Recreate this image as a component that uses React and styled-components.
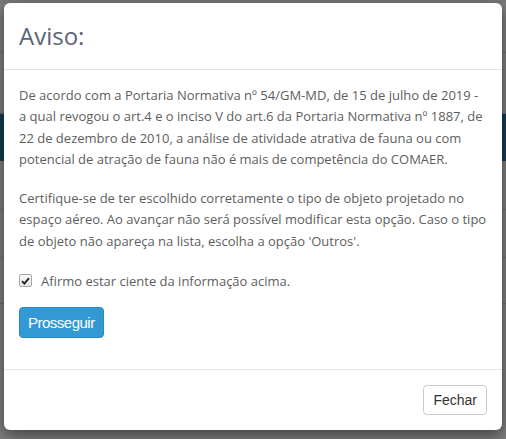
import React from 'react';
import styled, { createGlobalStyle } from 'styled-components';

const GlobalStyle = createGlobalStyle`
  html, body {
    margin: 0;
    padding: 0;
    width: 506px;
    height: 439px;
    overflow: hidden;
    background: #fff;
  }
`

function App() {
  return (
    <Page>
      <GlobalStyle />

      <Behind>
        <NavStrip />
        <Row h={60} />
        <BlueBand />
        <Row h={48} />
        <Row h={47} />
        <Row h={45} />
      </Behind>

      <Backdrop>
        <Dialog>
          <Header>
            <Title>Aviso:</Title>
          </Header>

          <Body>
            <Text>
              De acordo com a Portaria Normativa nº 54/GM-MD, de 15 de julho de 2019 -
              a qual revogou o art.4 e o inciso V do art.6 da Portaria Normativa nº 1887, de
              22 de dezembro de 2010, a análise de atividade atrativa de fauna ou com
              potencial de atração de fauna não é mais de competência do COMAER.
            </Text>
            <Text>
              Certifique-se de ter escolhido corretamente o tipo de objeto projetado no
              espaço aéreo. Ao avançar não será possível modificar esta opção. Caso o tipo
              de objeto não apareça na lista, escolha a opção 'Outros'.
            </Text>

            <CheckRow>
              <Box>
                <svg width="9" height="8" viewBox="0 0 9 8">
                  <path d="M1 4.2 L3.4 6.6 L8 1.2" fill="none" stroke="#222" strokeWidth="1.8" />
                </svg>
              </Box>
              Afirmo estar ciente da informação acima.
            </CheckRow>

            <ActionRow>
              <Button primary>Prosseguir</Button>
            </ActionRow>
          </Body>

          <Footer>
            <Button>Fechar</Button>
          </Footer>
        </Dialog>
      </Backdrop>
    </Page>
  )
}

const Page = styled.div`
  position: relative;
  width: 506px;
  height: 439px;
  overflow: hidden;
  font-family: "Open Sans", "Liberation Sans", sans-serif;
`

/* the page under the modal, only its edges show */
const Behind = styled.div`
  display: flex;
  flex-direction: column;
  height: 100%;
  background: #fff;
`

const NavStrip = styled.div`
  height: 52px;
  flex-shrink: 0;
  border-bottom: 1px solid #ddd;
  background: linear-gradient(#f2f2f2 0 3px, #fff 3px);
`

const Row = styled.div`
  height: ${p => p.h}px;
  flex-shrink: 0;
  border-bottom: 1px solid #ddd;
`

const BlueBand = styled.div`
  height: 47px;
  flex-shrink: 0;
  background: #2b7ba6;
`

const Backdrop = styled.div`
  position: absolute;
  inset: 0;
  background: rgba(0, 0, 0, 0.5);
  padding: 3px 4px 0 4px;
`

const Dialog = styled.div`
  width: 498px;
  background: #fff;
  border-radius: 6px;
  box-shadow: 0 5px 15px rgba(0, 0, 0, 0.5);
  display: flex;
  flex-direction: column;
`

const Header = styled.div`
  padding: 20px 15px;
  border-bottom: 1px solid #e5e5e5;
`

const Title = styled.h4`
  margin: 0;
  font-size: 24px;
  font-weight: 400;
  line-height: 26px;
  color: #5b6475;
`

const Body = styled.div`
  padding: 15px 15px 0 15px;
`

const Text = styled.p`
  margin: 0 0 18px 0;
  font-size: 13px;
  line-height: 21.3px;
  color: #5e5e5e;
`

const CheckRow = styled.label`
  display: flex;
  align-items: center;
  gap: 9px;
  height: 21px;
  font-size: 13px;
  color: #5e5e5e;
`

const Box = styled.span`
  width: 11px;
  height: 11px;
  border: 1px solid #a8a8a8;
  border-radius: 2px;
  background: linear-gradient(#fafafa, #e4e4e4);
  display: flex;
  align-items: center;
  justify-content: center;
`

const ActionRow = styled.div`
  padding: 16px 0 31px 0;
`

const Button = styled.button`
  font-family: "Liberation Sans", Arial, sans-serif;
  font-size: ${p => (p.primary ? '15px' : '14px')};
  letter-spacing: ${p => (p.primary ? '-0.5px' : '0')};
  height: ${p => (p.primary ? '31px' : '30px')};
  padding: ${p => (p.primary ? '0 8px' : '0 9px')};
  border-radius: 4px;
  border: 1px solid ${p => (p.primary ? '#2a88bd' : '#ccc')};
  background: ${p => (p.primary ? '#3399d4' : '#fff')};
  color: ${p => (p.primary ? '#fff' : '#333')};
  cursor: pointer;
`

const Footer = styled.div`
  border-top: 1px solid #e5e5e5;
  padding: 15px;
  display: flex;
  justify-content: flex-end;
`

export default App;
